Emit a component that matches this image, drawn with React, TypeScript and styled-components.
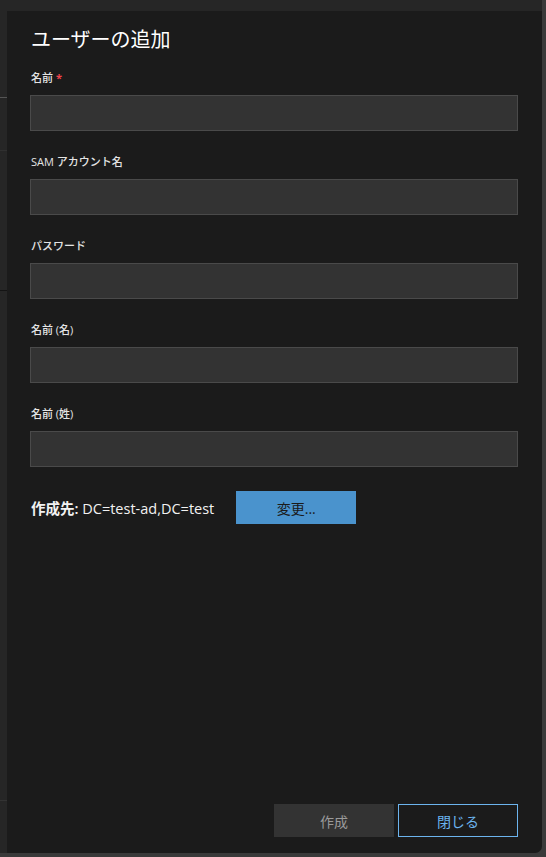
import React from 'react';
import styled, { createGlobalStyle } from 'styled-components';

const GlobalStyle = createGlobalStyle`
  html, body {
    margin: 0;
    padding: 0;
    background: #3a3a3a;
  }
  body {
    font-family: "Open Sans", "Noto Sans CJK JP", sans-serif;
    color: #e6e6e6;
  }
  * { box-sizing: border-box; }
`;

const Frame = styled.div`
  width: 542px;
  height: 853px;
  display: flex;
  background: #262626;
  border-bottom-right-radius: 7px;
  overflow: hidden;
`;

const Sidebar = styled.div`
  width: 7px;
  display: flex;
  flex-direction: column;
`;

const SideSegment = styled.div<{ h: number; line: string }>`
  height: ${p => p.h}px;
  flex-shrink: 0;
  border-bottom: 1px solid ${p => p.line};
`;

const Column = styled.div`
  flex: 1;
  padding-top: 11px;
  display: flex;
`;

const Panel = styled.div`
  flex: 1;
  background: #1b1b1b;
  border-bottom-right-radius: 7px;
  padding: 15px 24px 16px 23px;
  display: flex;
  flex-direction: column;
`;

const Title = styled.h1`
  margin: 0 0 16px 1px;
  font-size: 20px;
  line-height: 28px;
  font-weight: 400;
  color: #ffffff;
`;

const Field = styled.div`
  display: flex;
  flex-direction: column;
  gap: 9px;
  margin-bottom: 23px;
`;

const Label = styled.label`
  font-size: 11px;
  line-height: 16px;
  font-weight: 500;
  color: #e4e4e4;
  padding-left: 1px;
`;

const Required = styled.span`
  color: #f0444c;
  margin-left: 3px;
  font-weight: 700;
`;

const Input = styled.input`
  height: 36px;
  width: 100%;
  background: #333333;
  border: 1px solid #4a4a4a;
  outline: none;
  color: #eee;
  font-size: 14px;
  padding: 0 8px;
  font-family: inherit;
`;

const TargetRow = styled.div`
  display: flex;
  align-items: center;
  gap: 22px;
  margin-top: 1px;
  padding-left: 1px;
`;

const TargetText = styled.div`
  font-size: 14.5px;
  color: #f2f2f2;
`;

const TargetKey = styled.span`
  font-weight: 600;
`;

const Button = styled.button<{ variant: 'primary' | 'muted' | 'outline' }>`
  width: 120px;
  height: 33px;
  font-family: inherit;
  font-size: 14px;
  cursor: pointer;
  border: 1px solid transparent;
  background: ${p =>
    p.variant === 'primary' ? '#4a93cd' : p.variant === 'muted' ? '#333333' : 'transparent'};
  color: ${p =>
    p.variant === 'primary' ? '#1b1b1b' : p.variant === 'muted' ? '#9a9a9a' : '#6cb4ee'};
  border-color: ${p => (p.variant === 'outline' ? '#6cb4ee' : 'transparent')};
`;

const Footer = styled.div`
  margin-top: auto;
  display: flex;
  justify-content: flex-end;
  gap: 4px;
`;

const fields = [
  { label: '名前', required: true },
  { label: 'SAM アカウント名' },
  { label: 'パスワード', type: 'password' },
  { label: '名前 (名)' },
  { label: '名前 (姓)' },
];

export default function App() {
  return (
    <>
      <GlobalStyle />
      <Frame>
        <Sidebar>
          <SideSegment h={98} line="#555555" />
          <SideSegment h={53} line="#303030" />
          <SideSegment h={140} line="#141414" />
          <SideSegment h={510} line="#333333" />
        </Sidebar>
        <Column>
          <Panel>
            <Title>ユーザーの追加</Title>
            {fields.map(f => (
              <Field key={f.label}>
                <Label>
                  {f.label}
                  {f.required && <Required>*</Required>}
                </Label>
                <Input type={f.type || 'text'} />
              </Field>
            ))}
            <TargetRow>
              <TargetText>
                <TargetKey>作成先:</TargetKey> DC=test-ad,DC=test
              </TargetText>
              <Button variant="primary">変更...</Button>
            </TargetRow>
            <Footer>
              <Button variant="muted">作成</Button>
              <Button variant="outline">閉じる</Button>
            </Footer>
          </Panel>
        </Column>
      </Frame>
    </>
  );
}
